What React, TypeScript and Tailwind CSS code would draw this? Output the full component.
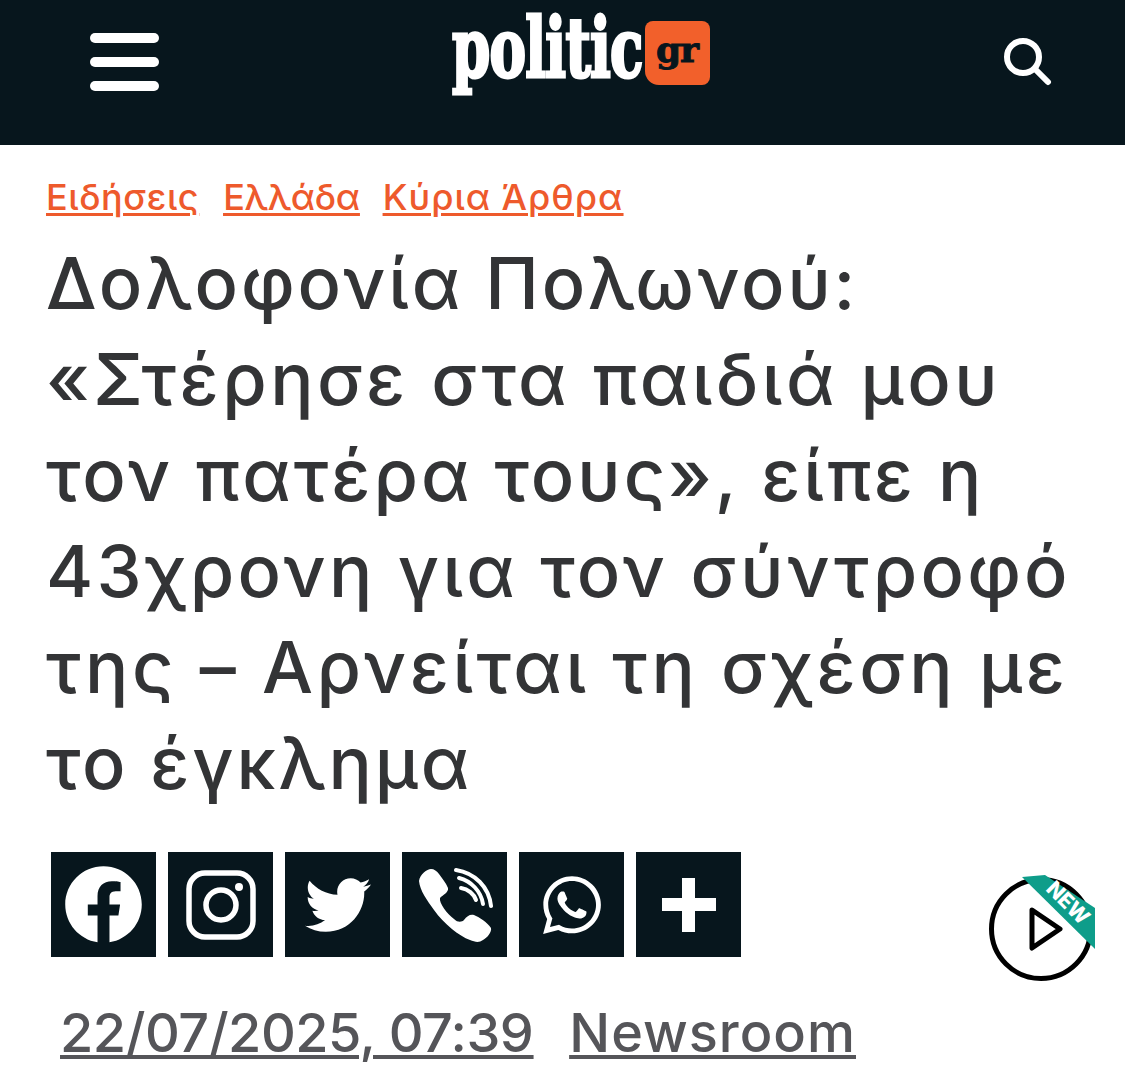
import { FaFacebook, FaTwitter, FaWhatsapp } from "react-icons/fa";

function Tile({ children }: { children: React.ReactNode }) {
  return <div className="w-[105px] h-[105px] bg-[#07161d] flex items-center justify-center text-white shrink-0">{children}</div>;
}

export default function App() {
  return (
    <div className="w-[1125px] h-[1085px] overflow-hidden bg-white font-['Inter',sans-serif]">
      <header className="h-[145px] bg-[#07161d] flex items-start justify-between pl-[90px] pr-[73px]">
        <div className="mt-[33px] flex flex-col gap-[14px] w-[69px]">
          <div className="h-[10px] rounded-full bg-white" />
          <div className="h-[10px] rounded-full bg-white" />
          <div className="h-[10px] rounded-full bg-white" />
        </div>
        <div className="flex items-start w-[258px]">
          <div className="w-[193px] h-[100px]">
            <span className="block w-max origin-left scale-x-[0.742] text-white text-[82px] leading-[96px] font-bold tracking-[-1px] whitespace-nowrap [-webkit-text-stroke:3px_white] font-['DejaVu_Serif_Condensed','DejaVu_Serif',serif]">politic</span>
          </div>
          <span className="block mt-[21px] w-[65px] h-[64px] rounded-[8px] rounded-bl-[14px] bg-[#f2602b] text-[#07161d] text-[36px] leading-[56px] text-center font-bold font-['DejaVu_Serif',serif] tracking-[-1px] [-webkit-text-stroke:1px_#07161d]">gr</span>
        </div>
        <svg className="mt-[36px]" width="50" height="50" viewBox="0 0 50 50" fill="none" stroke="white" strokeLinecap="round">
          <circle cx="21" cy="21" r="16" strokeWidth="6" />
          <path d="M33 33 L46 46" strokeWidth="6" />
        </svg>
      </header>
      <main className="pl-[46px] pr-[30px]">
        <div className="pt-[28px] flex gap-[23px] text-[#ee5a2c] text-[36px] leading-[48px] font-medium underline underline-offset-[3px] decoration-[3px]">
          <a className="tracking-[0.6px] mr-[1px]">Ειδήσεις</a>
          <a className="tracking-[-0.3px]">Ελλάδα</a>
          <a className="tracking-[1px]">Κύρια Άρθρα</a>
        </div>
        <h1 className="mt-[14px] text-[#333436] text-[72px] leading-[96px] font-medium whitespace-nowrap">
          <span className="block tracking-[2.85px]">Δολοφονία Πολωνού:</span>
          <span className="block tracking-[3.45px]">«Στέρησε στα παιδιά μου</span>
          <span className="block tracking-[3px]">τον πατέρα τους», είπε η</span>
          <span className="block tracking-[3.2px]">43χρονη για τον σύντροφό</span>
          <span className="block tracking-[3.55px]">της – Αρνείται τη σχέση με</span>
          <span className="block tracking-[2.8px]">το έγκλημα</span>
        </h1>
        <div className="mt-[41px] flex items-start">
          <div className="ml-[5px] flex gap-[12px]">
            <Tile><FaFacebook size={79} /></Tile>
            <Tile>
              <svg width="70" height="70" viewBox="0 0 70 70" fill="none" stroke="white" strokeWidth="5.5">
                <rect x="3" y="3" width="64" height="64" rx="16" />
                <circle cx="35" cy="35" r="15" />
                <circle cx="53" cy="17" r="4" fill="white" stroke="none" />
              </svg>
            </Tile>
            <Tile><FaTwitter size={66} /></Tile>
            <Tile>
              <svg width="76" height="76" viewBox="0 0 76 76" fill="white">
                <path d="M2 14 C3 7 10 2 14 2 C17 2 20 4 22 7 C25 11 29 16 31 21 C32 25 26 28 23 31 C22 36 30 47 37 52 C41 56 45 55 47 53 C50 49 53 47 57 48 C62 50 70 55 74 61 C75 65 70 71 66 73 C62 76 58 75 53 73 C42 69 27 57 17 43 C10 33 3 24 2 14 Z" />
                <g fill="none" stroke="white" strokeLinecap="round" strokeWidth="4">
                  <path d="M39 3 C58 6 72 20 74 39" />
                  <path d="M42 11 C54 14 64 24 66 37" />
                  <path d="M44 21 C51 22 57 27 59 33" />
                </g>
              </svg>
            </Tile>
            <Tile><FaWhatsapp size={66} /></Tile>
            <Tile>
              <svg width="54" height="54" viewBox="0 0 54 54" fill="white">
                <path d="M20 0H33V20H54V33H33V54H20V33H0V20H20Z" />
              </svg>
            </Tile>
          </div>
          <svg className="ml-[244px] mt-[22px] shrink-0" width="112" height="110" viewBox="0 0 112 110" fill="none">
            <circle cx="56" cy="55" r="49.5" stroke="black" strokeWidth="5" />
            <path d="M47 36 L75 55 L47 74 Z" stroke="black" strokeWidth="5" strokeLinejoin="round" />
            <path d="M37 3 L60 1 L110 34 L110 75 Z" fill="#0e9d8a" />
            <text textAnchor="middle" transform="translate(78,34) rotate(45)" fill="white" fontSize="21" fontWeight="800" fontFamily="Inter, sans-serif">NEW</text>
          </svg>
        </div>
        <div className="mt-[15px] ml-[14px] flex gap-[36px] text-[#555559] text-[54px] leading-[68px] font-medium underline underline-offset-[3px] decoration-[4px] whitespace-nowrap">
          <a className="tracking-[-0.5px]">22/07/2025, 07:39</a>
          <a className="tracking-[1px]">Newsroom</a>
        </div>
      </main>
    </div>
  );
}
